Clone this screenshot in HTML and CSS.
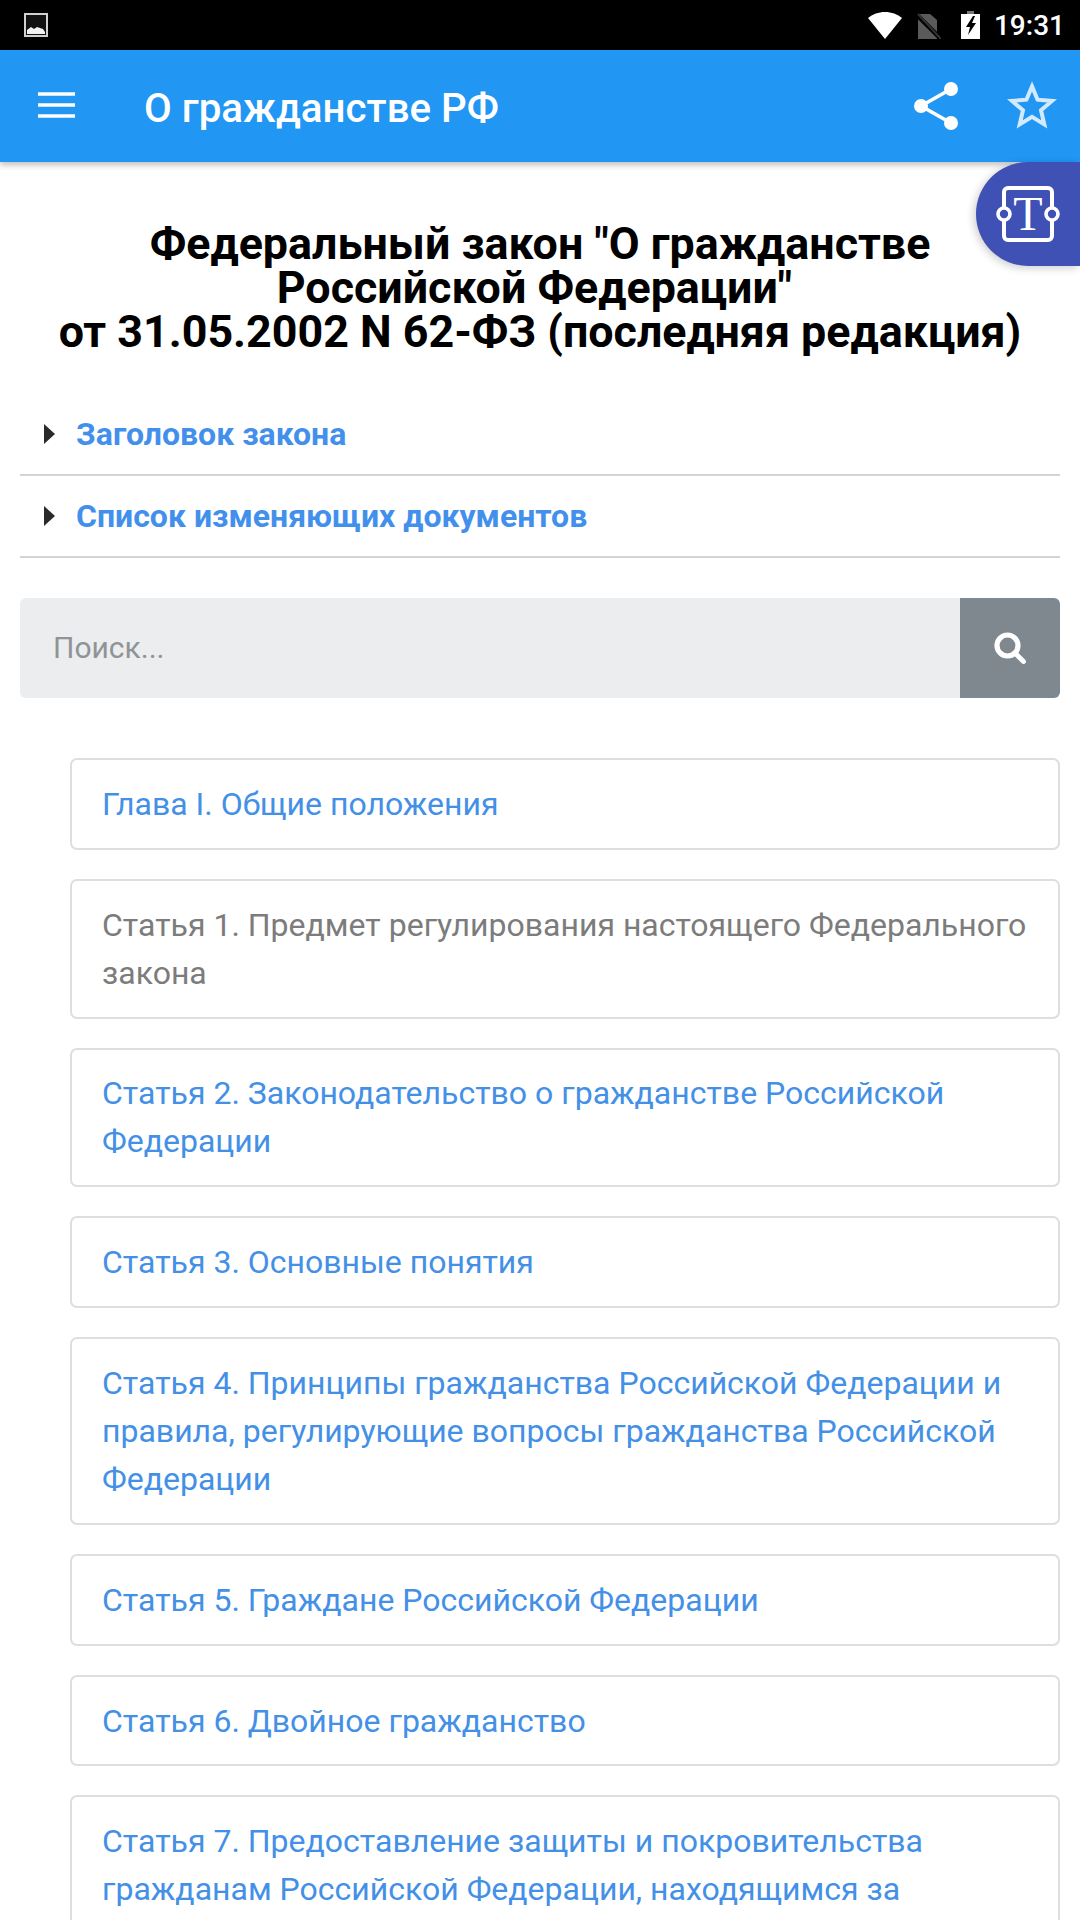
FILE: index.html
```html
<!DOCTYPE html>
<html lang="ru">
<head>
<meta charset="utf-8">
<title>О гражданстве РФ</title>
<link rel="stylesheet" href="styles.css">
</head>
<body>
<div class="screen">
  <div class="statusbar">
    <svg class="st-pic" width="24" height="24" viewBox="0 0 24 24"><rect x="1" y="1" width="22" height="22" fill="#111" stroke="#d0d0d0" stroke-width="2"/><path d="M3 21v-4l4-3 3 2 3-2 3 1 3 1 2 3v2z" fill="#f2f2f2"/></svg>
    <div class="st-right">
      <svg class="st-wifi" width="34" height="27" viewBox="0 0 34 27"><path d="M0 6C4.500 2.200 10.500 0 17 0S29.500 2.200 34 6L17 27z" fill="#fff"/></svg>
      <svg class="st-sim" width="26" height="26" viewBox="0 0 26 26"><path d="M3 1h12l7 6v19H3z" fill="#5a5a5a"/><path d="M0 0l26 26" stroke="#000" stroke-width="4.500"/><path d="M3 1l23 25" stroke="#333" stroke-width="2"/></svg>
      <svg class="st-bat" width="19" height="28" viewBox="0 0 19 28"><path d="M0 3h6V0h7v3h6v25H0z" fill="#fff"/><path d="M6 0h7v3H6z" fill="#777"/><path d="M12 5L5 16h4l-2 8 8-12h-4l3-7z" fill="#000"/></svg>
      <span class="clock">19:31</span>
    </div>
  </div>
  <header class="appbar">
    <svg class="menu" width="37" height="26" viewBox="0 0 37 26"><path d="M0 2h37M0 13h37M0 24h37" stroke="#fff" stroke-width="3.400"/></svg>
    <h1 class="apptitle">О гражданстве РФ</h1>
    <svg class="share" width="46" height="50" viewBox="0 0 46 50"><path d="M38 8L8 25l30 17" fill="none" stroke="#fff" stroke-width="3.600"/><circle cx="38" cy="8" r="7" fill="#fff"/><circle cx="8" cy="25" r="7" fill="#fff"/><circle cx="38" cy="42" r="7" fill="#fff"/></svg>
    <svg class="star" width="56" height="52" viewBox="0 0 56 52"><path d="M28 8.400L33.600 21.700 48 22.900 37 32.300 40.300 46.400 28 38.900 15.700 46.400 19 32.300 8 22.900 22.400 21.700z" fill="none" stroke="#d3e9fc" stroke-width="4"/></svg>
  </header>
  <div class="fab">
    <svg width="64" height="58" viewBox="0 0 64 58"><rect x="8" y="3" width="48" height="52" rx="4" fill="none" stroke="#fff" stroke-width="4"/><circle cx="8" cy="29" r="6" fill="#3f51b5" stroke="#fff" stroke-width="3.600"/><circle cx="56" cy="29" r="6" fill="#3f51b5" stroke="#fff" stroke-width="3.600"/><text class="fab-t" x="32" y="45" text-anchor="middle">T</text></svg>
  </div>
  <main class="content">
    <h2 class="doc-title">Федеральный закон "О гражданстве<br>Российской Федерации"&nbsp;<br>от 31.05.2002 N 62-ФЗ (последняя редакция)</h2>
    <div class="spoilers">
      <div class="spoiler"><span class="arrow"></span><a class="spoiler-link">Заголовок закона</a></div>
      <div class="spoiler"><span class="arrow"></span><a class="spoiler-link">Список изменяющих документов</a></div>
    </div>
    <div class="search">
      <div class="search-input">Поиск...</div>
      <div class="search-btn"><svg width="32" height="32" viewBox="0 0 32 32"><circle cx="13.500" cy="13.500" r="10.500" fill="none" stroke="#fff" stroke-width="5.200"/><path d="M21.500 21.500l8 8" stroke="#fff" stroke-width="4.800" stroke-linecap="round"/></svg></div>
    </div>
    <ul class="list">
      <li class="item">Глава I. Общие положения</li>
      <li class="item visited">Статья 1. Предмет регулирования настоящего Федерального закона</li>
      <li class="item">Статья 2. Законодательство о гражданстве Российской Федерации</li>
      <li class="item">Статья 3. Основные понятия</li>
      <li class="item">Статья 4. Принципы гражданства Российской Федерации и правила, регулирующие вопросы гражданства Российской Федерации</li>
      <li class="item">Статья 5. Граждане Российской Федерации</li>
      <li class="item">Статья 6. Двойное гражданство</li>
      <li class="item">Статья 7. Предоставление защиты и покровительства гражданам Российской Федерации, находящимся за пределами Российской Федерации</li>
    </ul>
  </main>
</div>
</body>
</html>
```
FILE: styles.css
```css
* { box-sizing: border-box; }
html, body { margin: 0; padding: 0; background: #fff; }
.screen { position: relative; width: 1080px; height: 1920px; overflow: hidden; font-family: Roboto, "Noto Sans", sans-serif; color: #212529; }
.statusbar { height: 50px; background: #000; display: flex; align-items: center; justify-content: space-between; padding: 0 15px 0 24px; }
.st-right { display: flex; align-items: center; }
.st-wifi { margin-top: 1px; }
.st-sim { margin-left: 13px; margin-top: 2px; }
.st-bat { margin-left: 20px; }
.clock { color: #fff; font-size: 28px; font-weight: 500; margin-left: 14px; }
.appbar { height: 112px; background: #2196f3; display: flex; align-items: center; padding: 0 20px 0 38px; box-shadow: 0 3px 6px rgba(0,0,0,.25); position: relative; z-index: 2; }
.menu { flex: none; margin-top: -2px; }
.apptitle { margin: 5px 0 0 69px; font-size: 40.3px; font-weight: 500; color: #fff; flex: 1; }
.share { margin-right: 45px; }
.star { margin-top: -4px; }
.fab { position: absolute; top: 162px; right: 0; width: 104px; height: 104px; background: #3f51b5; border-radius: 52px 0 0 52px; box-shadow: -2px 2px 8px rgba(0,0,0,.2); z-index: 3; display: flex; align-items: center; padding-left: 20px; }
.fab-t { font-family: "Liberation Serif", serif; font-size: 48px; fill: #fff; }
.content { padding: 0 20px; }
.doc-title { margin: 0; padding-top: 60px; text-align: center; font-size: 44.8px; line-height: 44px; font-weight: 700; color: #000; }
.spoilers { margin-top: 40px; }
.spoiler { display: flex; align-items: center; height: 82px; border-bottom: 2px solid #d4d4d4; padding-left: 24px; }
.arrow { width: 0; height: 0; border-style: solid; border-width: 10px 0 10px 11px; border-color: transparent transparent transparent #2a2a2a; margin-right: 21px; }
.spoiler-link { font-size: 32px; font-weight: 700; color: #4390ec; }
.search { display: flex; height: 100px; margin-top: 40px; border-radius: 6px; overflow: hidden; }
.search-input { flex: 1; background: #ebedef; color: #909397; font-size: 30px; display: flex; align-items: center; padding: 0 0 2px 33px; }
.search-btn { width: 100px; background: #7f888f; display: flex; align-items: center; justify-content: center; }
.list { list-style: none; margin: 60px 0 0 50px; padding: 0; display: flex; flex-direction: column; gap: 29px; }
.item { border: 2px solid #dedede; border-radius: 7px; padding: 19.9px 30px; font-size: 32px; line-height: 48px; color: #4390e6; }
.item.visited { color: #7c7c7c; }
```
